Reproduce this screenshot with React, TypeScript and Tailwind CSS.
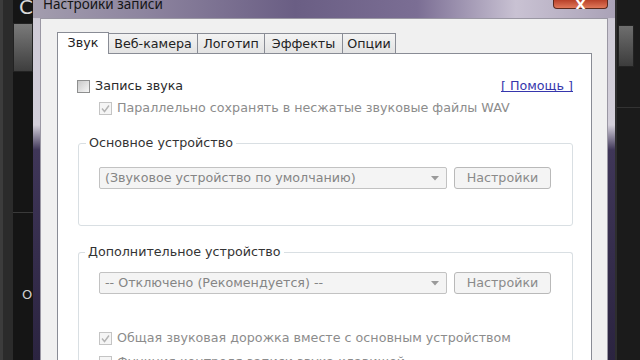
import React from "react";

const font = "font-['DejaVu_Sans',sans-serif]";

const Check = ({ checked, disabled }: { checked?: boolean; disabled?: boolean }) => {
  return (
    <span
      className={
        "flex w-[13px] h-[13px] shrink-0 items-center justify-center border " +
        (disabled
          ? "border-[#c4c4c4] bg-[#f5f5f5]"
          : "border-[#8e8f8f] bg-[linear-gradient(135deg,#c9c9c9,#f6f6f6)]")
      }
    >
      {checked && (
        <svg width="11" height="11" viewBox="0 0 11 11">
          <polyline points="2,5.5 4.5,8.5 9,2.5" fill="none" stroke="#b3b3b3" strokeWidth="1.4" />
        </svg>
      )}
    </span>
  );
};

const Combo = ({ text }: { text: string }) => (
  <div className="flex shrink-0 items-center gap-[7px]">
    <div className="flex h-[22px] w-[348px] items-center justify-between rounded-[2px] border border-[#c2c2c2] bg-[#f4f4f4] pl-[5px] pr-[7px] text-[#858585]">
      <span className="whitespace-nowrap">{text}</span>
      <svg width="8" height="5" viewBox="0 0 8 5">
        <polygon points="0,0 8,0 4,4.5" fill="#9a9a9a" />
      </svg>
    </div>
    <div className="flex h-[22px] w-[97px] items-center justify-center rounded-[3px] border border-[#b9b9b9] bg-[#f4f4f4] text-[#8a8a8a]">
      Настройки
    </div>
  </div>
);

const tabs = [
  { name: "Звук", w: "w-[52px]" },
  { name: "Веб-камера", w: "w-[90px]" },
  { name: "Логотип", w: "w-[68px]" },
  { name: "Эффекты", w: "w-[79px]" },
  { name: "Опции", w: "w-[54px]" },
];

export default function App() {
  return (
    <div className={"flex h-[360px] w-[640px] overflow-hidden bg-[#161616] " + font}>
      {/* левая часть программы за окном */}
      <div className="flex w-[33px] shrink-0">
        <div className="w-[3px] bg-[#3c3c3c]" />
        <div className="w-[10px] bg-[#2b2b2b]" />
        <div className="flex w-[20px] flex-col bg-[#151515]">
          <div className="h-[23px] shrink-0 overflow-hidden pl-[6px] text-[20px] leading-[14px] text-[#d8d8d8]">C</div>
          <div className="h-[49px] shrink-0 border border-[#222] bg-[linear-gradient(to_bottom,#7a7a7a,#3e3e3e)]" />
          <div className="h-[141px] shrink-0 border-b border-[#3a3a3a]" />
          <div className="mt-[72px] pl-[9px] text-[13px] text-[#d0d0d0]">O</div>
        </div>
      </div>

      {/* окно */}
      <div className="flex w-[582px] shrink-0 flex-col overflow-hidden bg-[linear-gradient(to_bottom,#918b9e_0px,#cfcbd7_20px,#d3cfda_125px,#3f3658_150px,#2b2440_100%)]">
        <div className="flex h-[18px] shrink-0 justify-between bg-[linear-gradient(to_right,#a39dae_0%,#8c839e_20%,#6a5e84_45%,#7b6e94_66%,#c9c2d3_83%,#aaa2b7_100%)] pl-[10px] pr-[7px]">
          <span className="-mt-[5px] font-['Noto_Sans',sans-serif] text-[13.5px] leading-[18px] text-[#151515]">
            Настройки записи
          </span>
          <div className="flex h-[9px] w-[55px] items-end justify-center rounded-b-[4px] border border-t-0 border-[#5a2a1e] bg-[linear-gradient(to_bottom,#b8412a,#e0785a)]">
            <span className="-mb-[3px] text-[13px] font-bold leading-[12px] text-white">X</span>
          </div>
        </div>

        <div className="mx-[7px] flex min-h-0 flex-1 flex-col overflow-hidden border border-b-0 border-[#9a97a3] bg-[#f0f0f0] pl-[16px] pr-[15px] pt-[13px] text-[12.7px]">
          <div className="relative z-10 -mb-px flex shrink-0 items-end">
            {tabs.map((t, i) =>
              i === 0 ? (
                <div
                  key={t.name}
                  className={t.w + " flex h-[22px] items-center justify-center border border-b-0 border-[#898c95] bg-white pb-[2px] text-[#222]"}
                >
                  {t.name}
                </div>
              ) : (
                <div
                  key={t.name}
                  className={t.w + " -ml-px mb-px flex h-[20px] items-center justify-center border border-b-0 border-[#898c95] bg-[linear-gradient(to_bottom,#f3f3f3,#e3e3e3)] text-[#222]"}
                >
                  {t.name}
                </div>
              )
            )}
          </div>

          <div className="flex min-h-0 flex-1 flex-col overflow-hidden border border-b-0 border-[#898c95] bg-white pl-[19px] pr-[18px] pt-[25px]">
            <div className="flex h-[14px] shrink-0 items-center justify-between">
              <div className="flex items-center gap-[5px]">
                <Check />
                <span className="text-[#2a2a2a]">Запись звука</span>
              </div>
              <span className="text-[#3636ad] underline">[ Помощь ]</span>
            </div>

            <div className="mt-[8px] flex h-[14px] shrink-0 items-center gap-[5px] pl-[22px]">
              <Check checked disabled />
              <span className="whitespace-nowrap text-[#8c8c8c]">Параллельно сохранять в несжатые звуковые файлы WAV</span>
            </div>

            <fieldset className="ml-px mt-[20px] shrink-0 rounded-[3px] border border-[#d9dfe3]">
              <legend className="ml-[7px] px-[3px] leading-[16px] text-[#333]">Основное устройство</legend>
              <div className="pb-[36px] pl-[20px] pt-[16px]">
                <Combo text="(Звуковое устройство по умолчанию)" />
              </div>
            </fieldset>

            <fieldset className="ml-px mt-[18px] shrink-0 rounded-[3px] border border-b-0 border-[#d9dfe3]">
              <legend className="ml-[6px] px-[3px] leading-[16px] text-[#333]">Дополнительное устройство</legend>
              <div className="pl-[20px] pt-[12px]">
                <Combo text="-- Отключено (Рекомендуется) --" />
                <div className="mt-[37px] flex h-[14px] items-center gap-[5px]">
                  <Check checked disabled />
                  <span className="whitespace-nowrap text-[#8c8c8c]">Общая звуковая дорожка вместе с основным устройством</span>
                </div>
                <div className="mt-[10px] flex h-[14px] items-center gap-[5px]">
                  <Check disabled />
                  <span className="whitespace-nowrap text-[#8c8c8c]">Функция контроля записи звука клавишей</span>
                </div>
              </div>
            </fieldset>
          </div>
        </div>
      </div>

      {/* правая часть за окном */}
      <div className="flex flex-1 flex-col border-l-2 border-[#2e2e2e] bg-[#1b1b1b]">
        <div className="ml-[1px] mt-[25px] h-[42px] w-[16px] shrink-0 border border-[#222] bg-[linear-gradient(to_bottom,#6e6e6e,#3c3c3c)]" />
        <div className="mt-[40px] h-px shrink-0 bg-[#333]" />
      </div>
    </div>
  );
}
